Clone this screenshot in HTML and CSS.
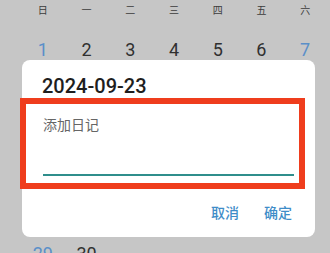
FILE: index.html
```html
<!DOCTYPE html>
<html lang="zh">
<head>
<meta charset="utf-8">
<link rel="stylesheet" href="styles.css">
</head>
<body>
<div class="calendar">
  <div class="weekdays">
    <span>日</span><span>一</span><span>二</span><span>三</span><span>四</span><span>五</span><span>六</span>
  </div>
  <div class="week"><span class="sun">1</span><span>2</span><span>3</span><span>4</span><span>5</span><span>6</span><span class="sat">7</span></div>
  <div class="week covered"><span class="sun">8</span><span>9</span><span>10</span><span>11</span><span>12</span><span>13</span><span class="sat">14</span></div>
  <div class="week covered"><span class="sun">15</span><span>16</span><span>17</span><span>18</span><span>19</span><span>20</span><span class="sat">21</span></div>
  <div class="week covered"><span class="sun">22</span><span>23</span><span>24</span><span>25</span><span>26</span><span>27</span><span class="sat">28</span></div>
  <div class="week"><span class="sun">29</span><span>30</span></div>
</div>

<div class="dialog">
  <div class="dialog-title">2024-09-23</div>
  <div class="field">
    <div class="placeholder">添加日记</div>
    <div class="underline"></div>
  </div>
  <div class="actions">
    <span class="btn">取消</span>
    <span class="btn">确定</span>
  </div>
</div>

<div class="highlight"></div>
</body>
</html>
```

FILE: styles.css
```css
html, body {
  margin: 0;
  padding: 0;
}
body {
  width: 330px;
  height: 253px;
  overflow: hidden;
  background: #c6c6c6;
  position: relative;
  font-family: Roboto, "Noto Sans CJK SC", sans-serif;
}
.calendar {
  padding-left: 21px;
  width: 306px;
}
.weekdays,
.week {
  display: grid;
  grid-template-columns: repeat(7, 1fr);
  text-align: center;
}
.weekdays {
  height: 20px;
  line-height: 20px;
  margin-bottom: 4px;
  font-family: "Noto Sans CJK SC", sans-serif;
  font-size: 10px;
  color: #3c3c3c;
}
.week {
  height: 51px;
  line-height: 51px;
  font-size: 18px;
  color: #303030;
}
.week.covered {
  visibility: hidden;
}
.week .sun,
.week .sat {
  color: #5a8fc9;
}
.dialog {
  position: absolute;
  left: 22px;
  top: 60px;
  width: 293px;
  height: 177px;
  background: #fff;
  border-radius: 8px;
  box-sizing: border-box;
  padding: 14px 21px 0 20px;
  display: flex;
  flex-direction: column;
}
.dialog-title {
  font-family: Roboto, sans-serif;
  font-weight: 500;
  font-size: 20px;
  line-height: 24px;
  color: #1e1e1e;
}
.field {
  margin-top: 16px;
  margin-left: 1px;
}
.placeholder {
  font-family: "Noto Sans CJK SC", sans-serif;
  font-size: 14px;
  line-height: 20px;
  color: #666;
}
.underline {
  margin-top: 40px;
  height: 2px;
  background: #2f8e8c;
}
.actions {
  margin-top: 26px;
  display: flex;
  justify-content: flex-end;
  gap: 25px;
  padding-right: 2px;
}
.btn {
  font-family: "Noto Sans CJK SC", sans-serif;
  font-size: 14px;
  line-height: 20px;
  font-weight: 500;
  color: #3f8dc8;
}
.highlight {
  position: absolute;
  left: 20px;
  top: 98px;
  width: 285px;
  height: 91px;
  box-sizing: border-box;
  border: 6px solid #ef3d1d;
}
```
